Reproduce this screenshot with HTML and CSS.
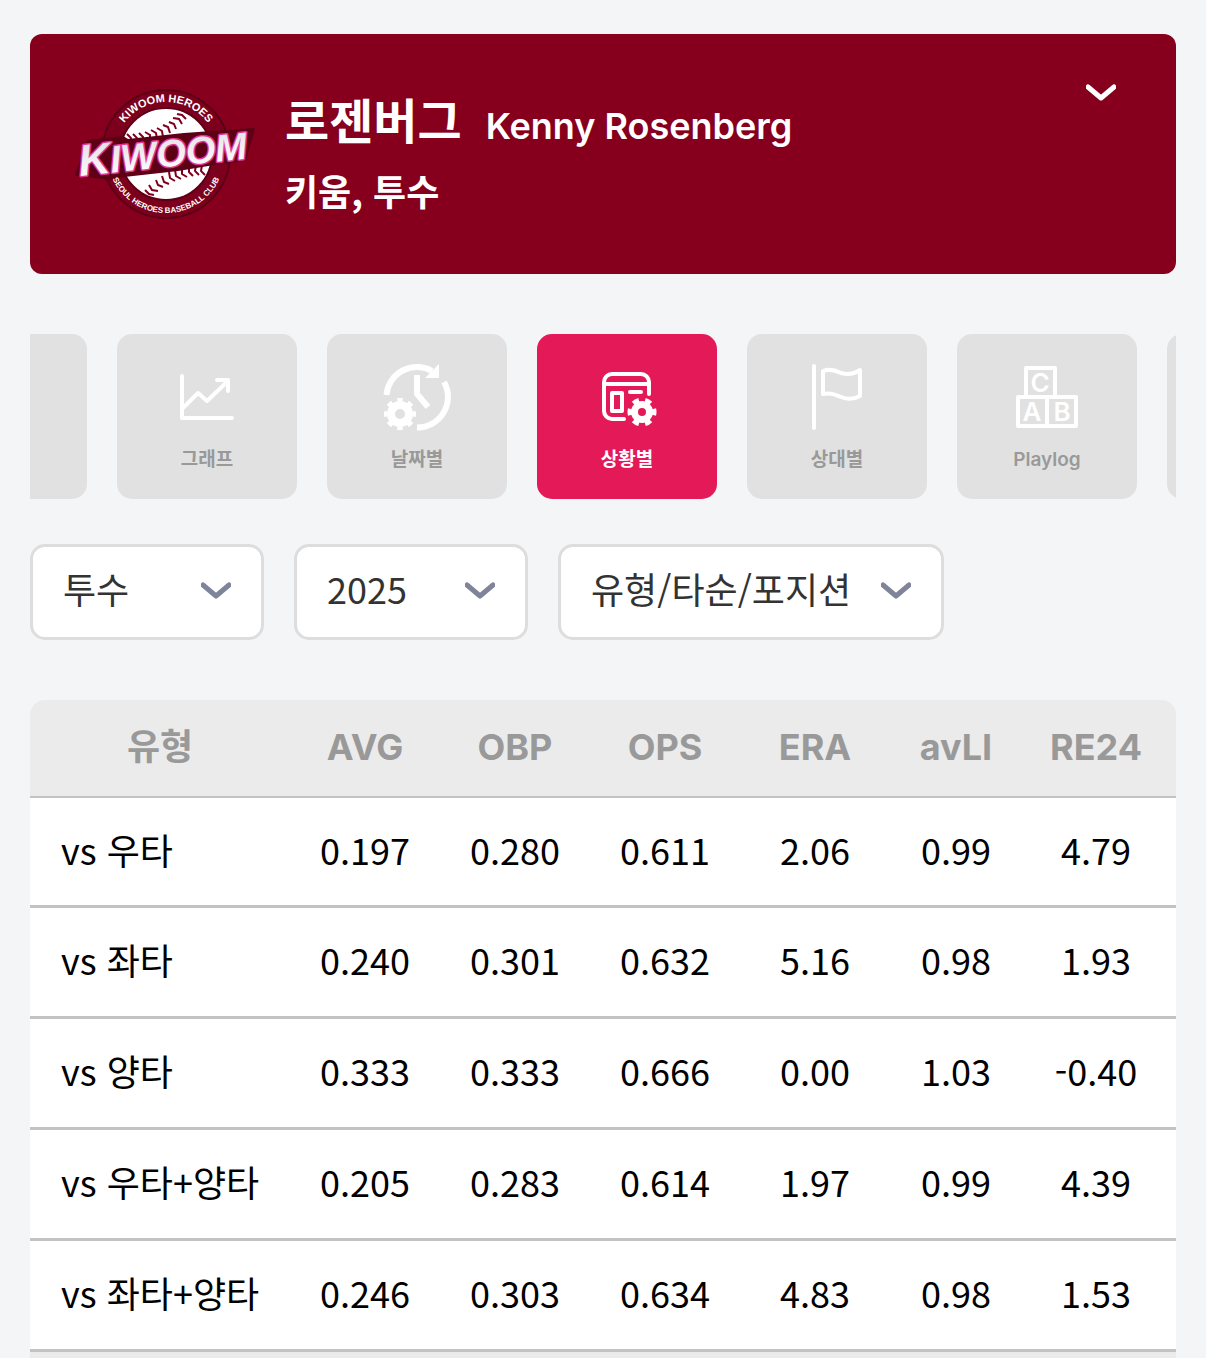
FILE: index.html
```html
<!DOCTYPE html>
<html lang="ko">
<head>
<meta charset="utf-8">
<meta name="viewport" content="width=device-width, initial-scale=1">
<title>로젠버그 - 상황별</title>
<link rel="stylesheet" href="styles.css">
</head>
<body>
<main class="page">
  <header class="player">
    <svg class="player-logo" viewBox="0 0 200 156" role="img" aria-label="Kiwoom Heroes">
      <defs>
        <path id="arc-top" d="M48 78 A52 52 0 0 1 152 78"/>
        <path id="arc-bottom" d="M41 78 A59 59 0 0 0 159 78"/>
        <linearGradient id="silver" x1="0" y1="0" x2="0" y2="1">
          <stop offset="0" stop-color="#dcdadd"/>
          <stop offset="0.5" stop-color="#f0eef0"/>
          <stop offset="1" stop-color="#fff"/>
        </linearGradient>
      </defs>
      <circle cx="100" cy="78" r="64" fill="#7c001d" stroke="#5d0016" stroke-width="2"/>
      <circle cx="100" cy="78" r="46" fill="#fff" stroke="#5d0016" stroke-width="2"/>
      <g fill="none" stroke="#7c001d" stroke-width="2">
        <path d="M61 58 l4 4 -1 6 M67 58 l4 4 -1 6 M73 57 l4 4 0 6 M79 56 l5 3 0 6 M85 54 l5 3 1 6 M91 52 l5 3 1 6 M97 49 l5 2 2 6 M103 46 l5 2 2 5 M107 42 l6 1 3 5 M111 38 l5 1 4 4"/>
        <path d="M139 99 l-4 -4 1 -6 M133 99 l-4 -4 1 -6 M127 100 l-4 -4 0 -6 M121 101 l-5 -3 0 -6 M115 103 l-5 -3 -1 -6 M109 105 l-5 -3 -1 -6 M103 108 l-5 -2 -2 -6 M97 111 l-5 -2 -2 -5 M92 115 l-6 -1 -3 -5 M88 119 l-5 -1 -4 -4"/>
      </g>
      <path d="M10 99 L22 65 L57 61 L62 64 L118 58 L188 53 L179 84 L142 89 L112 94 L58 100 L42 104 L38 102Z" fill="#5d0016" stroke="#5d0016" stroke-width="2" stroke-linejoin="round"/>
      <text class="logo-word" x="14" y="100" transform="rotate(-6 14 100)"><tspan class="logo-initial">K</tspan>IWOOM</text>
      <text class="logo-top"><textPath href="#arc-top" startOffset="50%">KIWOOM HEROES</textPath></text>
      <text class="logo-bottom"><textPath href="#arc-bottom" startOffset="50%">SEOUL HEROES BASEBALL CLUB</textPath></text>
    </svg>
    <div class="player-info">
      <h1 class="player-name">로젠버그 <span class="player-name-en">Kenny Rosenberg</span></h1>
      <p class="player-team">키움, 투수</p>
    </div>
    <button class="player-toggle" type="button" aria-label="펼치기">
      <svg class="chevron" viewBox="0 0 30 18"><path d="M2 3 L15 14 L28 3"/></svg>
    </button>
  </header>

  <nav class="tabs">
    <div class="tabs-track">
      <button class="tab" type="button" aria-label="이전"></button>
      <button class="tab" type="button">
        <svg class="tab-icon" viewBox="0 0 72 72"><path d="M11 15 V57 H61 M12 47 L27 32 L36 40 L57 20 M46 19 H57 V30"/></svg>
        <span>그래프</span>
      </button>
      <button class="tab" type="button">
        <svg class="tab-icon" viewBox="0 0 72 72">
          <g stroke-width="6" stroke-linecap="butt" stroke-linejoin="miter">
            <path d="M5.500 34 A30.500 30.500 0 0 1 51 10"/>
            <path d="M63 21 A30.500 30.500 0 0 1 36 66.500"/>
            <path d="M36 14 V33 L47 46"/>
          </g>
          <path class="solid" d="M58 3 V17 H44Z"/>
          <circle cx="19" cy="53" r="9" stroke-width="8"/>
          <circle cx="19" cy="53" r="13" pathLength="80" stroke-width="6" stroke-linecap="butt" stroke-dasharray="5 5" stroke-dashoffset="2.500"/>
        </svg>
        <span>날짜별</span>
      </button>
      <button class="tab tab-active" type="button" aria-current="page">
        <svg class="tab-icon" viewBox="0 0 72 72">
          <path d="M58 33 V21 A8 8 0 0 0 50 13 H21 A8 8 0 0 0 13 21 V50 A8 8 0 0 0 21 58 H33 M13 23 H58 M21 32 H31 V50 H21Z M39 31 H50"/>
          <circle cx="51" cy="51" r="7.500" stroke-width="7"/>
          <circle cx="51" cy="51" r="11" pathLength="60" stroke-width="7" stroke-linecap="butt" stroke-dasharray="5 5" stroke-dashoffset="2.500"/>
        </svg>
        <span>상황별</span>
      </button>
      <button class="tab" type="button">
        <svg class="tab-icon" viewBox="0 0 72 72"><path d="M13 5 V67 M22 10 Q30 7 40 12 Q50 15 59 9 V35 Q50 40 40 36 Q30 31 22 33Z"/></svg>
        <span>상대별</span>
      </button>
      <button class="tab" type="button">
        <svg class="tab-icon" viewBox="0 0 72 72">
          <path d="M15 7 H44 V36 H15Z M7 36 H36 V65 H7Z M36 36 H65 V65 H36Z"/>
          <text x="29" y="31">C</text><text x="21" y="60">A</text><text x="51" y="60">B</text>
        </svg>
        <span>Playlog</span>
      </button>
      <button class="tab" type="button" aria-label="다음"></button>
    </div>
  </nav>

  <form class="filters">
    <div class="filter">
      <select class="filter-select" aria-label="포지션"><option>투수</option></select>
      <svg class="chevron filter-chevron" viewBox="0 0 30 18"><path d="M2 3 L15 14 L28 3"/></svg>
    </div>
    <div class="filter">
      <select class="filter-select" aria-label="시즌"><option>2025</option></select>
      <svg class="chevron filter-chevron" viewBox="0 0 30 18"><path d="M2 3 L15 14 L28 3"/></svg>
    </div>
    <div class="filter filter-wide">
      <select class="filter-select" aria-label="상황"><option>유형/타순/포지션</option></select>
      <svg class="chevron filter-chevron" viewBox="0 0 30 18"><path d="M2 3 L15 14 L28 3"/></svg>
    </div>
  </form>

  <table class="stats">
    <colgroup>
      <col class="col-type"><col class="col-stat"><col class="col-stat"><col class="col-stat"><col class="col-stat"><col class="col-li"><col class="col-re">
    </colgroup>
    <thead>
      <tr><th scope="col">유형</th><th scope="col">AVG</th><th scope="col">OBP</th><th scope="col">OPS</th><th scope="col">ERA</th><th scope="col">avLI</th><th scope="col">RE24</th></tr>
    </thead>
    <tbody>
      <tr><th scope="row">vs 우타</th><td>0.197</td><td>0.280</td><td>0.611</td><td>2.06</td><td>0.99</td><td>4.79</td></tr>
      <tr><th scope="row">vs 좌타</th><td>0.240</td><td>0.301</td><td>0.632</td><td>5.16</td><td>0.98</td><td>1.93</td></tr>
      <tr><th scope="row">vs 양타</th><td>0.333</td><td>0.333</td><td>0.666</td><td>0.00</td><td>1.03</td><td>-0.40</td></tr>
      <tr><th scope="row">vs 우타+양타</th><td>0.205</td><td>0.283</td><td>0.614</td><td>1.97</td><td>0.99</td><td>4.39</td></tr>
      <tr><th scope="row">vs 좌타+양타</th><td>0.246</td><td>0.303</td><td>0.634</td><td>4.83</td><td>0.98</td><td>1.53</td></tr>
    </tbody>
    <tfoot>
      <tr><td colspan="7"></td></tr>
    </tfoot>
  </table>
</main>
</body>
</html>
```
FILE: styles.css
```css
:root {
  --sans: "Noto Sans CJK KR", sans-serif;
  --latin: Inter, "Noto Sans CJK KR", sans-serif;
  --wine: #86001e;
  --pink: #e31958;
  --tile: #e1e1e1;
  --muted: #999;
  --line: #c3c3c3;
}

* { box-sizing: border-box; }

body {
  margin: 0;
  background: #f4f5f7;
  font-family: var(--sans);
  font-size: 36px;
  color: #000;
}

button { border: 0; font: inherit; cursor: pointer; }

.page { padding: 34px 30px 0; }

.chevron {
  display: block;
  width: 30px;
  height: 18px;
  fill: none;
  stroke: currentColor;
  stroke-width: 5;
  stroke-linejoin: round;
  stroke-linecap: round;
}

/* Player card */
.player {
  display: flex;
  align-items: center;
  height: 240px;
  padding: 0 60px 0 36px;
  border-radius: 12px;
  background: var(--wine);
  color: #fff;
}

.player-logo { flex: none; width: 200px; height: 156px; }

.logo-word {
  font: italic bold 38px "Liberation Sans", sans-serif;
  fill: url(#silver);
  stroke: #e0359a;
  stroke-width: 3px;
  stroke-linejoin: round;
  paint-order: stroke;
}

.logo-initial { font-size: 44px; }

.logo-top,
.logo-bottom {
  font: bold 11px "Liberation Sans", sans-serif;
  fill: #fff;
  text-anchor: middle;
}

.logo-bottom { font-size: 8px; }

.player-info { flex: 1; padding-left: 19px; }

.player-name {
  display: flex;
  align-items: baseline;
  gap: 24px;
  margin: 0;
  font-size: 48px;
  font-weight: 700;
  line-height: 64px;
}

.player-name-en {
  font-family: var(--latin);
  font-size: 36px;
  font-weight: 600;
}

.player-team {
  margin: 0;
  font-weight: 700;
  line-height: 64px;
}

.player-toggle {
  align-self: flex-start;
  margin-top: 50px;
  padding: 0;
  background: none;
  color: #fff;
}

/* Section tabs */
.tabs { margin-top: 60px; overflow: hidden; }

.tabs-track { display: flex; gap: 30px; margin-left: -123px; }

.tab {
  display: flex;
  flex: none;
  flex-direction: column;
  align-items: center;
  gap: 15px;
  width: 180px;
  height: 165px;
  padding: 27px 0 0;
  border-radius: 15px;
  background: var(--tile);
  color: var(--muted);
  font-family: var(--latin);
  font-size: 19px;
  font-weight: 600;
  line-height: 24px;
}

.tab-active { background: var(--pink); color: #fff; }

.tab-icon {
  width: 72px;
  height: 72px;
  fill: none;
  stroke: #fff;
  stroke-width: 4;
  stroke-linecap: round;
  stroke-linejoin: round;
}

.tab-icon .solid { fill: #fff; stroke: none; }

.tab-icon text {
  font: 600 26px Inter, sans-serif;
  fill: #fff;
  stroke: none;
  text-anchor: middle;
}

/* Filters */
.filters { display: flex; gap: 30px; margin-top: 45px; }

.filter { position: relative; width: 234px; }

.filter-wide { width: 386px; }

.filter-select {
  width: 100%;
  height: 96px;
  padding: 0 30px 8px;
  border: 3px solid #ddd;
  border-radius: 15px;
  appearance: none;
  background: #fff;
  color: #333;
  font: inherit;
}

.filter-chevron {
  position: absolute;
  top: 38px;
  right: 33px;
  color: #80849b;
  pointer-events: none;
}

/* Stats table */
.stats {
  width: 100%;
  margin-top: 60px;
  border-spacing: 0;
  line-height: 54px;
  text-align: center;
  white-space: nowrap;
}

.col-type { width: 260px; }
.col-stat { width: 150px; }
.col-li { width: 132px; }
.col-re { width: 154px; }

.stats th,
.stats td { padding: 0 0 6px; }

.stats th:last-child,
.stats td:last-child { padding-right: 6px; }

.stats thead th {
  height: 98px;
  padding-bottom: 2px;
  border-bottom: 2px solid var(--line);
  background: #ebebeb;
  color: var(--muted);
  font-family: var(--latin);
  font-weight: 700;
}

.stats thead th:first-child { border-top-left-radius: 15px; }
.stats thead th:last-child { border-top-right-radius: 15px; }

.stats tbody th,
.stats tbody td {
  height: 111px;
  border-bottom: 3px solid var(--line);
  background: #fff;
}

.stats tbody tr:first-child > * { height: 110px; }

.stats tbody th {
  padding-left: 31px;
  font-weight: 400;
  text-align: left;
}

.stats tfoot td { height: 6px; background: #ebebeb; }
```
